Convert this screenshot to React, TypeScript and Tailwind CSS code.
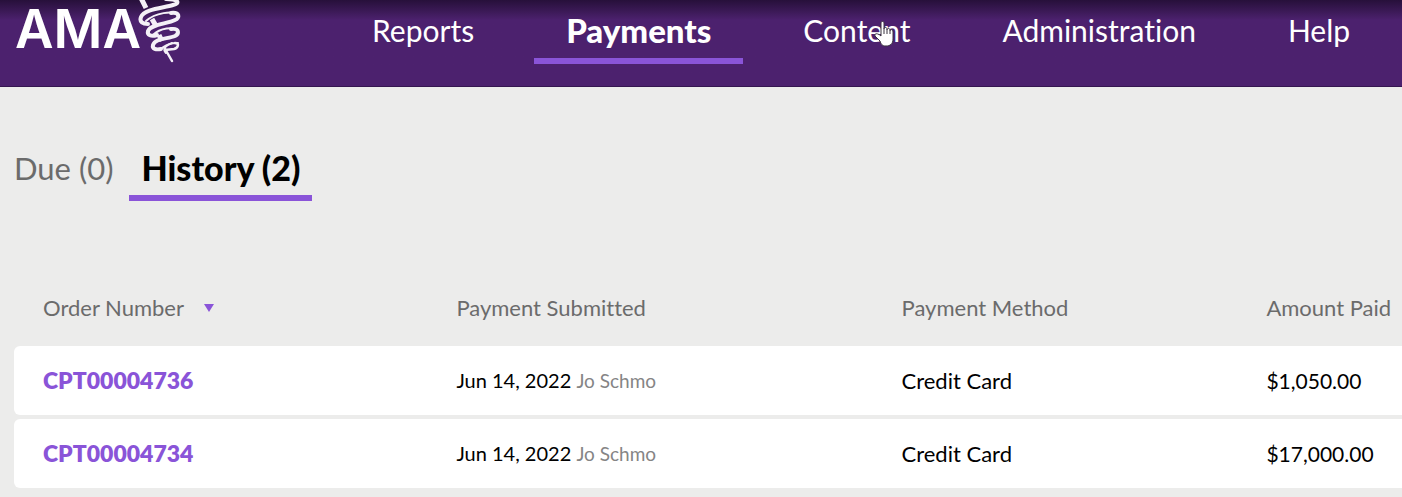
const navItems = ["Reports", "Payments", "Content", "Administration", "Help"];

const payments = [
  { order: "CPT00004736", date: "Jun 14, 2022", by: "Jo Schmo", method: "Credit Card", amount: "$1,050.00" },
  { order: "CPT00004734", date: "Jun 14, 2022", by: "Jo Schmo", method: "Credit Card", amount: "$17,000.00" },
];

const Logo = () => (
  <svg width="170" height="66" viewBox="0 0 170 66" fill="none" role="img" aria-label="AMA">
    <text x="0" y="48" fill="#fff" fontFamily="Inter, sans-serif" fontSize="53" fontWeight="600">
      AMA
    </text>
    <g stroke="#f4f0f7" strokeLinecap="round" strokeLinejoin="round">
      {/* staff */}
      <path d="M126 -2L131 8M137 19L141 26M144 35L147 41" strokeWidth="5" strokeLinecap="butt" />
      <path d="M149 47L157 61" strokeWidth="2.5" />
      {/* thin back of each coil */}
      <path d="M131 21C140 13 158 10 163 15" strokeWidth="2" />
      <path d="M138 35C145 28 159 26 163 31" strokeWidth="2" />
      <path d="M142 50C148 50 150 42 163 43" strokeWidth="2" />
      <path d="M151 53C147 49 151 45 157 43" strokeWidth="2" />
      {/* wide front of each coil */}
      <path d="M151 -1C163 -1 166 3 158 5C148 8 129 9 126 17C124 22 128 24 133 24" strokeWidth="4" />
      <path d="M156 13C165 12 165 18 160 20C152 24 136 24 133 31C132 35 136 37 142 35" strokeWidth="4" />
      <path d="M156 29C165 28 164 34 160 36C153 39 140 38 138 45C137 49 141 50 146 49" strokeWidth="4" />
      <path d="M160 43C165 43 163 48 159 49L150 50" strokeWidth="2.5" />
    </g>
  </svg>
);

const HandPointer = () => (
  <svg className="pointer-events-none absolute left-[103px] top-[10px]" width="22" height="28" viewBox="0 0 22 28" aria-hidden="true">
    <path
      d="M7 3C7 1 10 1 10 3V9C10 7 13 7 13 9V10C13 8 16 8 16 10V11C16 9 19 9 19 12V19C19 24 16 26 12 26C8 26 7 24 6 21L1 16C0 13 4 13 7 16Z"
      fill="#fff"
      stroke="#3b3440"
    />
    <path d="M10 9v5M13 10v4M16 11v3" stroke="#3b3440" />
  </svg>
);

const Header = () => (
  <header className="flex h-[87px] items-start border-b border-[#351650] bg-linear-to-b from-[#27103a] to-[#4c216e] to-[20px] pl-[15px]">
    <a href="#home" className="mr-[155px] shrink-0">
      <Logo />
    </a>
    <nav className="flex gap-7 pt-[10px] text-[30px] leading-10 text-white">
      {navItems.map((item) => (
        <a
          key={item}
          href={`#${item.toLowerCase()}`}
          className={
            item === "Payments"
              ? "border-b-6 border-[#8a54d8] px-8 pb-2 text-[33px] font-black"
              : "relative px-8"
          }
        >
          {item}
          {item === "Content" && <HandPointer />}
        </a>
      ))}
    </nav>
  </header>
);

const Tabs = () => (
  <div className="flex gap-4 pl-[14px] text-[31px] leading-10">
    <button type="button" className="self-start text-[#6b6b6b]">
      Due (0)
    </button>
    <button type="button" className="border-b-6 border-[#8a54d8] px-3 pb-[7px] text-[34px] font-black text-black">
      History (2)
    </button>
  </div>
);

const PaymentsTable = () => (
  <table className="w-full table-fixed border-separate border-spacing-y-1 text-left text-[22px] leading-7">
    <thead className="text-[#6b6b6b]">
      <tr className="h-[68px]">
        <th className="w-[30%] pl-[29px] font-normal">
          <button type="button" className="flex items-center gap-5">
            Order Number
            <svg width="10" height="8" viewBox="0 0 10 8" aria-hidden="true">
              <path d="M0 0h10L5 8z" fill="#8a54d8" />
            </svg>
          </button>
        </th>
        <th className="w-[32%] pl-[26px] font-normal">Payment Submitted</th>
        <th className="w-[26%] pl-[27px] font-normal">Payment Method</th>
        <th className="pl-[31px] font-normal whitespace-nowrap">Amount Paid</th>
      </tr>
    </thead>
    <tbody className="text-black">
      {payments.map((p) => (
        <tr key={p.order} className="h-[69px]">
          <td className="rounded-l-md bg-white pl-[29px]">
            <a href={`#${p.order}`} className="text-[23px] font-extrabold text-[#8a54d8]">
              {p.order}
            </a>
          </td>
          <td className="bg-white pl-[26px] text-xl">
            {p.date} <span className="text-[19px] text-[#858585]">{p.by}</span>
          </td>
          <td className="bg-white pl-[27px]">{p.method}</td>
          <td className="bg-white pl-[31px] text-[21px]">{p.amount}</td>
        </tr>
      ))}
    </tbody>
  </table>
);

const App = () => {
  return (
    <div className="min-h-screen overflow-hidden bg-[#ececeb] font-[Lato,sans-serif] [font-variant-ligatures:none]">
      <Header />
      <main className="pt-[61px]">
        <Tabs />
        <div className="mt-[69px] pl-[14px]">
          <PaymentsTable />
        </div>
      </main>
    </div>
  );
};

export default App;
